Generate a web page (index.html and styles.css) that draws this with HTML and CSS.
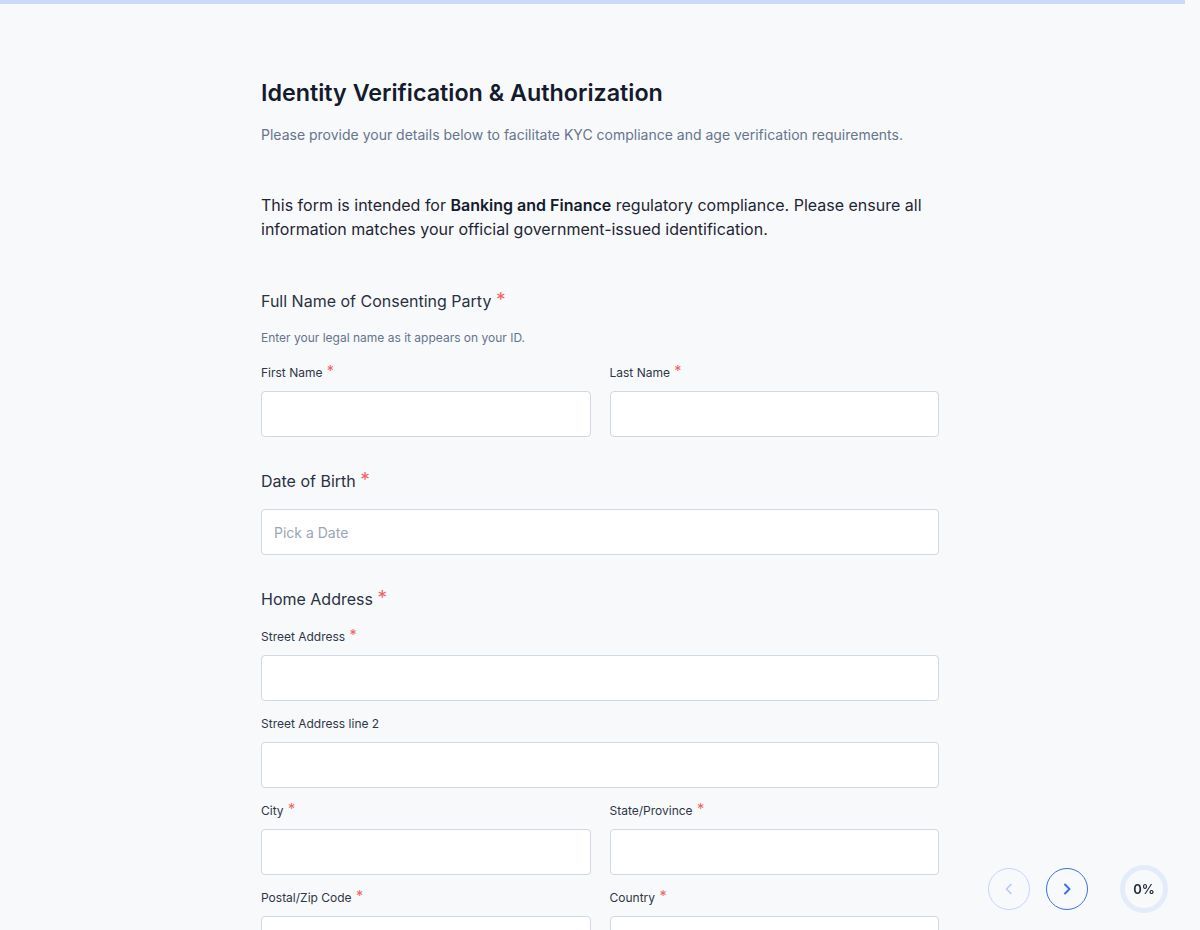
FILE: index.html
```html
<!DOCTYPE html>
<html lang="en">
<head>
    <meta charset="UTF-8">
    <meta name="viewport" content="width=device-width, initial-scale=1.0">
    <title>Identity Verification &amp; Authorization</title>
    <link rel="stylesheet" href="styles.css">
</head>
<body>
    <div class="progress-track"><div class="progress-fill"></div></div>

    <main class="form-wrap">
        <h1 class="form-title">Identity Verification &amp; Authorization</h1>
        <p class="form-subtitle">Please provide your details below to facilitate KYC compliance and age verification requirements.</p>

        <p class="form-intro">This form is intended for <strong>Banking and Finance</strong> regulatory compliance. Please ensure all information matches your official government-issued identification.</p>

        <!-- Nama lengkap -->
        <section class="section">
            <h2 class="section-title">Full Name of Consenting Party <span class="req">*</span></h2>
            <p class="section-help">Enter your legal name as it appears on your ID.</p>
            <div class="row">
                <div class="field">
                    <label class="field-label" for="firstName">First Name <span class="req">*</span></label>
                    <input class="field-input" type="text" id="firstName">
                </div>
                <div class="field">
                    <label class="field-label" for="lastName">Last Name <span class="req">*</span></label>
                    <input class="field-input" type="text" id="lastName">
                </div>
            </div>
        </section>

        <!-- Tanggal lahir -->
        <section class="section">
            <h2 class="section-title">Date of Birth <span class="req">*</span></h2>
            <input class="field-input" type="text" id="dob" placeholder="Pick a Date">
        </section>

        <!-- Alamat -->
        <section class="section">
            <h2 class="section-title">Home Address <span class="req">*</span></h2>
            <div class="fields">
                <div class="field">
                    <label class="field-label" for="street1">Street Address <span class="req">*</span></label>
                    <input class="field-input" type="text" id="street1">
                </div>
                <div class="field">
                    <label class="field-label" for="street2">Street Address line 2</label>
                    <input class="field-input" type="text" id="street2">
                </div>
                <div class="row">
                    <div class="field">
                        <label class="field-label" for="city">City <span class="req">*</span></label>
                        <input class="field-input" type="text" id="city">
                    </div>
                    <div class="field">
                        <label class="field-label" for="state">State/Province <span class="req">*</span></label>
                        <input class="field-input" type="text" id="state">
                    </div>
                </div>
                <div class="row">
                    <div class="field">
                        <label class="field-label" for="zip">Postal/Zip Code <span class="req">*</span></label>
                        <input class="field-input" type="text" id="zip">
                    </div>
                    <div class="field">
                        <label class="field-label" for="country">Country <span class="req">*</span></label>
                        <input class="field-input" type="text" id="country">
                    </div>
                </div>
            </div>
        </section>
    </main>

    <div class="nav">
        <button class="nav-btn nav-btn-disabled" aria-label="Previous">
            <svg width="16" height="16" viewBox="0 0 16 16" fill="none"><path d="M10 3.5L5.5 8L10 12.5" stroke="currentColor" stroke-width="1.5" stroke-linecap="round" stroke-linejoin="round"/></svg>
        </button>
        <button class="nav-btn" aria-label="Next">
            <svg width="16" height="16" viewBox="0 0 16 16" fill="none"><path d="M6 3.5L10.5 8L6 12.5" stroke="currentColor" stroke-width="2" stroke-linecap="round" stroke-linejoin="round"/></svg>
        </button>
        <div class="progress-ring">0%</div>
    </div>
</body>
</html>
```

FILE: styles.css
```css
body {
    margin: 0;
    font-family: Inter, "Noto Sans", sans-serif;
    background-color: #f8f9fb;
    color: #1f2937;
}
.progress-track {
    width: calc(100% - 15px);
    height: 4px;
    background-color: #dbe6fa;
}
.progress-fill {
    width: 100%;
    height: 100%;
    background-color: #cbdbf7;
}
.form-wrap {
    width: 678px;
    margin: 0 auto;
    padding: 73px 0 120px;
}
.form-title {
    margin: 0;
    font-size: 23.3px;
    line-height: 32px;
    font-weight: 600;
    color: #141b2d;
}
.form-subtitle {
    margin: 15px 0 0;
    font-size: 14px;
    line-height: 22px;
    color: #66758c;
}
.form-intro {
    margin: 47px 0 0;
    font-size: 16px;
    line-height: 24px;
    color: #1f2533;
}
.form-intro strong {
    font-weight: 600;
    color: #141b2d;
}
.section {
    margin-top: 32px;
    display: flex;
    flex-direction: column;
    gap: 16px;
}
.form-intro + .section {
    margin-top: 48px;
}
.section-title {
    margin: 0;
    font-size: 16px;
    line-height: 24px;
    font-weight: 400;
    color: #2a3142;
}
.section-help {
    margin: 0;
    font-size: 12px;
    line-height: 18px;
    color: #66758c;
}
/* tanda wajib isi, tidak mengubah tinggi baris */
.req {
    color: #f26464;
    font-size: 1.2em;
    line-height: 0;
    position: relative;
    top: -1px;
}
.field-label .req {
    margin-left: 1px;
}
.fields {
    display: flex;
    flex-direction: column;
    gap: 13px;
}
.row {
    display: grid;
    grid-template-columns: 1fr 1fr;
    gap: 19px;
}
.field {
    display: flex;
    flex-direction: column;
    gap: 8px;
}
.field-label {
    font-size: 12px;
    line-height: 20px;
    color: #2f3747;
}
.field-input {
    height: 46px;
    padding: 0 12px;
    border: 1px solid #cfd8e5;
    border-radius: 4px;
    background-color: #ffffff;
    font-family: inherit;
    font-size: 14px;
    color: #1f2937;
    box-sizing: border-box;
    width: 100%;
}
.field-input::placeholder {
    color: #9aa6b8;
}
.field-input:focus {
    outline: none;
    border-color: #3b6fe3;
}
.nav {
    position: fixed;
    right: 32px;
    bottom: 17px;
    display: flex;
    align-items: center;
}
.nav-btn {
    width: 42px;
    height: 42px;
    margin-right: 16px;
    border-radius: 50%;
    border: 1.5px solid #3b6fe3;
    background-color: transparent;
    color: #3b6fe3;
    display: flex;
    align-items: center;
    justify-content: center;
    padding: 0;
    cursor: pointer;
}
.nav-btn-disabled {
    border-color: #c4d5f7;
    color: #b3c7f2;
    cursor: default;
}
.nav-btn + .nav-btn {
    margin-right: 32px;
}
.progress-ring {
    width: 48px;
    height: 48px;
    border-radius: 50%;
    border: 5px solid #e4ebf9;
    box-sizing: border-box;
    display: flex;
    align-items: center;
    justify-content: center;
    font-size: 13px;
    font-weight: 600;
    color: #252b38;
}
```
